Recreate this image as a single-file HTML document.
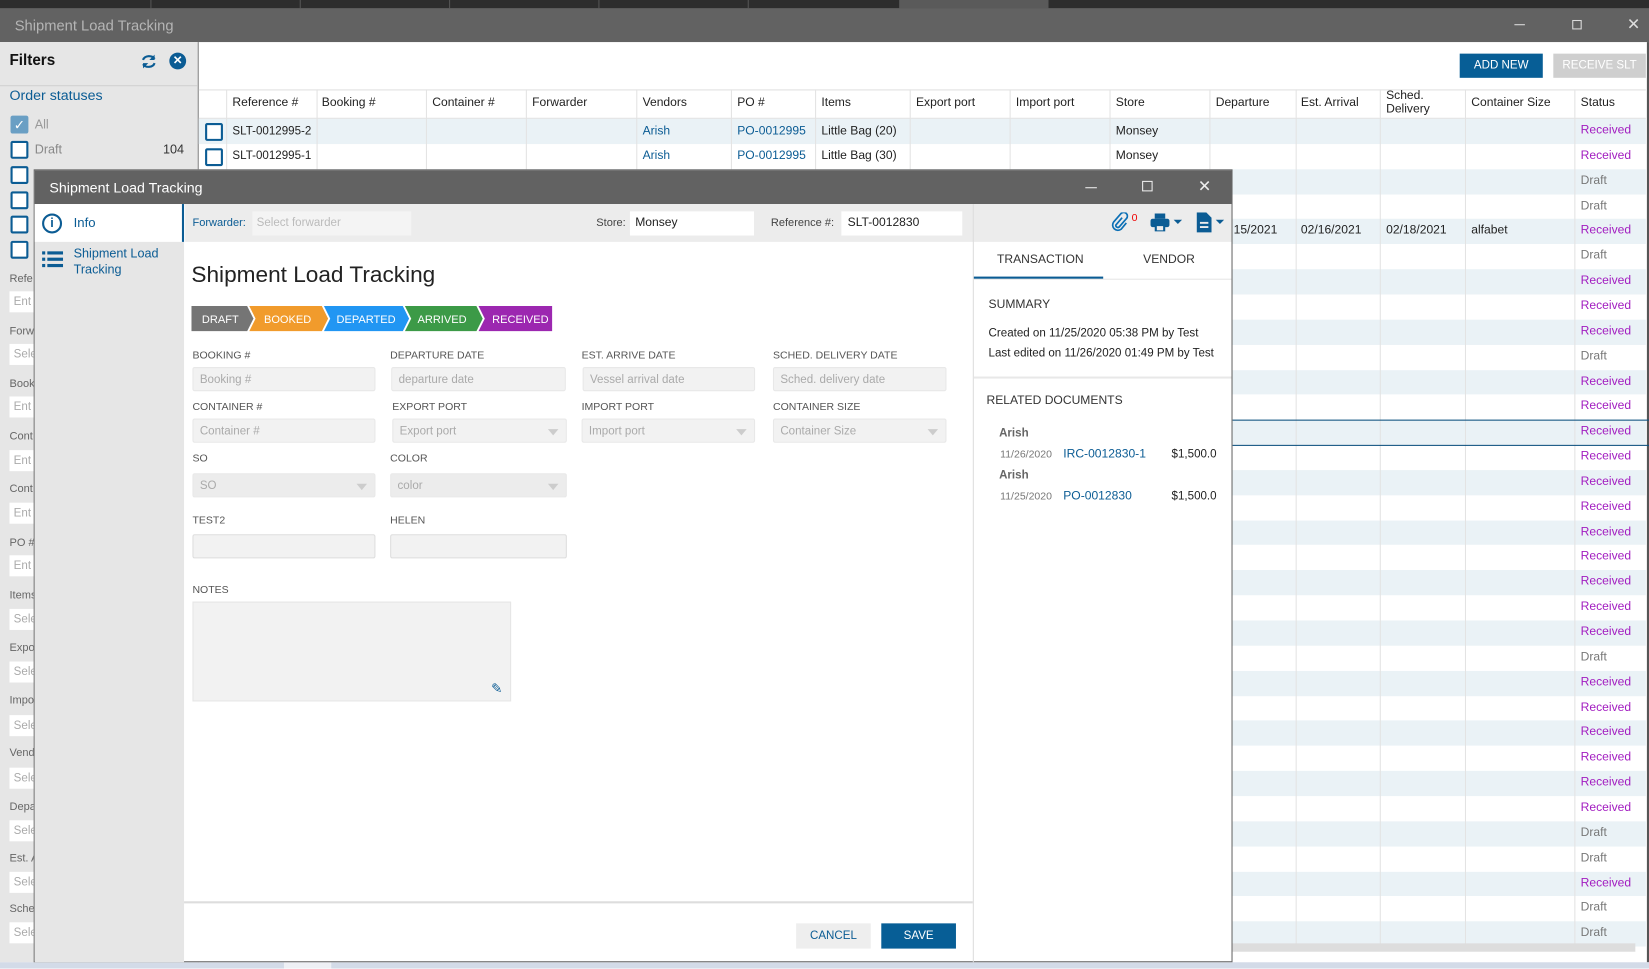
<!DOCTYPE html>
<html><head><meta charset="utf-8"><style>
*{box-sizing:border-box;margin:0;padding:0}
body{width:1649px;height:969px;overflow:hidden;background:#fff;font-family:"Liberation Sans",sans-serif;}
#w{position:absolute;left:0;top:0;width:1568px;height:921px;transform:scale(1.05166);transform-origin:0 0;overflow:hidden;background:#fff}
.a{position:absolute}
.t{position:absolute;white-space:nowrap}
.cb{position:absolute;width:17px;height:17px;border:2px solid #0b5c94;border-radius:2px;background:#fff}
.lbl{position:absolute;font-size:10px;color:#555;white-space:nowrap}
.inp{position:absolute;height:23px;background:#f2f2f2;border:1px solid #e8e8e8;border-radius:2px;font-size:11px;color:#aaa;padding:5px 6px;white-space:nowrap}
.dd::after{content:"";position:absolute;right:7px;top:9px;border-left:5px solid transparent;border-right:5px solid transparent;border-top:6px solid #ccc}
.row{position:absolute;left:189px;width:1376px;height:23.85px}
.st{position:absolute;left:1503px;font-size:11.5px}
.vl{position:absolute;top:85px;width:1px;height:815px;background:#e3e3e3}
.th{position:absolute;top:92px;font-size:11.5px;color:#222;white-space:nowrap}
.fl{position:absolute;left:9px;font-size:10.5px;color:#666}
.fi{position:absolute;left:9px;width:172px;height:20px;background:#fff;font-size:11px;color:#aaa;padding:4px 4px}
.c{font-size:11.5px}
</style></head><body><div id="w">
<div class="a" style="left:0;top:0;width:1568px;height:8px;background:#2d2d2d"></div>
<div class="a" style="left:143px;top:0;width:1px;height:8px;background:#555"></div>
<div class="a" style="left:285px;top:0;width:1px;height:8px;background:#555"></div>
<div class="a" style="left:427px;top:0;width:1px;height:8px;background:#555"></div>
<div class="a" style="left:569px;top:0;width:1px;height:8px;background:#555"></div>
<div class="a" style="left:711px;top:0;width:1px;height:8px;background:#555"></div>
<div class="a" style="left:855px;top:0;width:142px;height:8px;background:#5a5a5a"></div>
<div class="a" style="left:0;top:8px;width:1568px;height:32px;background:#626262"></div>
<div class="t" style="left:14px;top:16px;font-size:14px;color:#b5b5b5">Shipment Load Tracking</div>
<div class="a" style="left:1440px;top:23px;width:10px;height:1px;background:#ddd"></div>
<div class="a" style="left:1495px;top:19px;width:9px;height:9px;border:1px solid #ddd"></div>
<div class="t" style="left:1547px;top:14px;font-size:15px;color:#ddd">✕</div>
<div class="a" style="left:0;top:40px;width:189px;height:875px;background:#e6e6e6;border-right:1px solid #888"></div>
<div class="t" style="left:9px;top:50px;font-size:14.5px;font-weight:bold;color:#111">Filters</div>
<svg class="a" style="left:133px;top:50px" width="17" height="17" viewBox="0 0 17 17"><path d="M3 7a6 5 0 0 1 11-1M14 10a6 5 0 0 1-11 1" fill="none" stroke="#0b5c94" stroke-width="2"/><path d="M14 2v5h-5zM3 15v-5h5z" fill="#0b5c94"/></svg>
<div class="a" style="left:161px;top:50px;width:16px;height:16px;border-radius:50%;background:#0b5c94;color:#fff;font-size:11px;text-align:center;line-height:16px;font-weight:bold">✕</div>
<div class="a" style="left:0;top:81px;width:188px;height:1px;background:#d0d0d0"></div>
<div class="t" style="left:9px;top:83px;font-size:13.5px;color:#0b5c94">Order statuses</div>
<div class="a" style="left:10px;top:110px;width:17px;height:17px;background:#6a9fc4;border-radius:2px;color:#fff;font-size:13px;text-align:center;line-height:17px">✓</div>
<div class="t" style="left:33px;top:111px;font-size:12px;color:#999">All</div>
<div class="cb" style="left:10px;top:134px"></div>
<div class="t" style="left:33px;top:135px;font-size:12px;color:#888">Draft</div>
<div class="t" style="left:155px;top:135px;font-size:12px;color:#333">104</div>
<div class="cb" style="left:10px;top:158px"></div>
<div class="cb" style="left:10px;top:182px"></div>
<div class="cb" style="left:10px;top:205px"></div>
<div class="cb" style="left:10px;top:229px"></div>
<div class="fl" style="top:259px">Refe</div><div class="fi" style="top:277px">Ent</div>
<div class="fl" style="top:309px">Forw</div><div class="fi" style="top:327px">Sele</div>
<div class="fl" style="top:359px">Book</div><div class="fi" style="top:377px">Ent</div>
<div class="fl" style="top:409px">Cont</div><div class="fi" style="top:428px">Ent</div>
<div class="fl" style="top:459px">Cont</div><div class="fi" style="top:478px">Ent</div>
<div class="fl" style="top:510px">PO #</div><div class="fi" style="top:528px">Ent</div>
<div class="fl" style="top:560px">Items</div><div class="fi" style="top:579px">Sele</div>
<div class="fl" style="top:610px">Expo</div><div class="fi" style="top:629px">Sele</div>
<div class="fl" style="top:660px">Impo</div><div class="fi" style="top:680px">Sele</div>
<div class="fl" style="top:710px">Vend</div><div class="fi" style="top:730px">Sele</div>
<div class="fl" style="top:761px">Depa</div><div class="fi" style="top:780px">Sele</div>
<div class="fl" style="top:810px">Est. A</div><div class="fi" style="top:829px">Sele</div>
<div class="fl" style="top:858px">Sche</div><div class="fi" style="top:877px">Sele</div>
<div class="a" style="left:1566px;top:40px;width:2px;height:875px;background:#555"></div>
<div class="a" style="left:1388px;top:51px;width:79px;height:23px;background:#075e96;color:#fff;font-size:11px;text-align:center;line-height:23px">ADD NEW</div>
<div class="a" style="left:1477px;top:51px;width:88px;height:23px;background:#cfcfcf;color:#fff;font-size:11px;text-align:center;line-height:23px">RECEIVE SLT</div>
<div class="a" style="left:189px;top:85px;width:1376px;height:1px;background:#e0e0e0"></div>
<div class="a" style="left:189px;top:112px;width:1376px;height:1px;background:#e0e0e0"></div>
<div class="th" style="left:221px">Reference #</div><div class="th" style="left:306px">Booking #</div><div class="th" style="left:411px">Container #</div><div class="th" style="left:506px">Forwarder</div><div class="th" style="left:611px">Vendors</div><div class="th" style="left:701px">PO #</div><div class="th" style="left:781px">Items</div><div class="th" style="left:871px">Export port</div><div class="th" style="left:966px">Import port</div><div class="th" style="left:1061px">Store</div><div class="th" style="left:1156px">Departure</div><div class="th" style="left:1237px">Est. Arrival</div><div class="th" style="left:1318px;top:85px;line-height:13px">Sched.<br>Delivery</div><div class="th" style="left:1399px">Container Size</div><div class="th" style="left:1503px">Status</div>
<div id="rows"></div>
<div class="vl" style="left:215px"></div><div class="vl" style="left:301px"></div><div class="vl" style="left:405px"></div><div class="vl" style="left:500px"></div><div class="vl" style="left:605px"></div><div class="vl" style="left:695px"></div><div class="vl" style="left:775px"></div><div class="vl" style="left:865px"></div><div class="vl" style="left:960px"></div><div class="vl" style="left:1055px"></div><div class="vl" style="left:1150px"></div><div class="vl" style="left:1232px"></div><div class="vl" style="left:1312px"></div><div class="vl" style="left:1393px"></div><div class="vl" style="left:1497px"></div>
<div class="cb" style="left:195px;top:117px"></div><div class="cb" style="left:195px;top:141px"></div>
<div class="t c" style="left:221px;top:119px;color:#222;font-size:11px">SLT-0012995-2</div>
<div class="t c" style="left:221px;top:142px;color:#222;font-size:11px">SLT-0012995-1</div>
<div class="t c" style="left:611px;top:119px;color:#0b5c94">Arish</div><div class="t c" style="left:611px;top:142px;color:#0b5c94">Arish</div>
<div class="t c" style="left:701px;top:119px;color:#0b5c94">PO-0012995</div><div class="t c" style="left:701px;top:142px;color:#0b5c94">PO-0012995</div>
<div class="t c" style="left:781px;top:119px;color:#222">Little Bag (20)</div><div class="t c" style="left:781px;top:142px;color:#222">Little Bag (30)</div>
<div class="t c" style="left:1061px;top:119px;color:#222">Monsey</div><div class="t c" style="left:1061px;top:142px;color:#222">Monsey</div>
<div class="t c" style="left:1173px;top:213px;color:#222">15/2021</div><div class="t c" style="left:1237px;top:213px;color:#222">02/16/2021</div><div class="t c" style="left:1318px;top:213px;color:#222">02/18/2021</div><div class="t c" style="left:1399px;top:213px;color:#222">alfabet</div>
<div class="a" style="left:1172px;top:399px;width:1393px;height:1px;background:#0b4f7e"></div>
<div class="a" style="left:1172px;top:423px;width:1393px;height:1px;background:#0b4f7e"></div>
<div class="a" style="left:1172px;top:897px;width:383px;height:8px;background:#ddd"></div>
<div class="a" style="left:0;top:915px;width:1568px;height:6px;background:#d3dbe8"></div>
<div class="a" style="left:270px;top:915px;width:45px;height:6px;background:#eef0f5"></div>
<div class="a" style="left:32px;top:161px;width:1140px;height:754px;background:#fff;border:1px solid #666"></div>
<div class="a" style="left:33px;top:162px;width:1138px;height:32px;background:#626262"></div>
<div class="t" style="left:47px;top:171px;font-size:13.5px;color:#fff">Shipment Load Tracking</div>
<div class="a" style="left:1032px;top:178px;width:11px;height:1px;background:#eee"></div>
<div class="a" style="left:1086px;top:172px;width:10px;height:10px;border:1px solid #eee"></div>
<div class="t" style="left:1139px;top:168px;font-size:15px;color:#eee">✕</div>
<div class="a" style="left:33px;top:194px;width:142px;height:721px;background:#e6e6e6"></div>
<div class="a" style="left:33px;top:194px;width:142px;height:36px;background:#fff;border-right:2px solid #0b5c94"></div>
<div class="a" style="left:40px;top:203px;width:19px;height:19px;border:2px solid #0b5c94;border-radius:50%;color:#0b5c94;font-size:12px;font-weight:bold;text-align:center;line-height:15px">i</div>
<div class="t" style="left:70px;top:205px;font-size:12.5px;color:#0b5c94">Info</div>
<svg class="a" style="left:40px;top:238px" width="20" height="20" viewBox="0 0 20 20" fill="#0b5c94"><rect x="0" y="1" width="3" height="3"/><rect x="5" y="1" width="15" height="3"/><rect x="0" y="7" width="3" height="3"/><rect x="5" y="7" width="15" height="3"/><rect x="0" y="13" width="3" height="3"/><rect x="5" y="13" width="15" height="3"/></svg>
<div class="t" style="left:70px;top:234px;font-size:12px;color:#0b5c94;line-height:15px">Shipment Load<br>Tracking</div>
<div class="a" style="left:176px;top:194px;width:995px;height:36px;background:#ececec"></div>
<div class="t" style="left:183px;top:206px;font-size:10.5px;color:#0b5c94">Forwarder:</div>
<div class="a" style="left:240px;top:201px;width:151px;height:23px;background:#f4f4f4;font-size:11px;color:#bbb;padding:5px 4px">Select forwarder</div>
<div class="t" style="left:567px;top:206px;font-size:10.5px;color:#444">Store:</div>
<div class="a" style="left:599px;top:201px;width:118px;height:23px;background:#fff;font-size:11.5px;color:#222;padding:5px 5px">Monsey</div>
<div class="t" style="left:733px;top:206px;font-size:10.5px;color:#444">Reference #:</div>
<div class="a" style="left:800px;top:201px;width:115px;height:23px;background:#fff;font-size:11.5px;color:#222;padding:5px 6px">SLT-0012830</div>
<svg class="a" style="left:1055px;top:202px" width="18" height="18" viewBox="0 0 18 18"><path d="M12 5l-6 7a2 2 0 0 0 3 2l7-8a3.5 3.5 0 0 0-5-5l-7 8a5 5 0 0 0 7 7l5-6" fill="none" stroke="#0b6fb5" stroke-width="1.6"/></svg>
<div class="t" style="left:1076px;top:202px;font-size:10px;color:#e00">0</div>
<svg class="a" style="left:1094px;top:203px" width="32" height="18" viewBox="0 0 32 18" fill="#0b5c94"><rect x="4" y="0" width="10" height="5"/><rect x="0" y="5" width="18" height="8" rx="2"/><rect x="4" y="11" width="10" height="6"/><rect x="6" y="12" width="6" height="4" fill="#ececec"/><path d="M22 6h8l-4 4z"/></svg>
<svg class="a" style="left:1137px;top:202px" width="30" height="20" viewBox="0 0 30 20" fill="#0b5c94"><path d="M1 0h9l5 5v14h-14z"/><rect x="4" y="9" width="8" height="1.8" fill="#ececec"/><rect x="4" y="13" width="8" height="1.8" fill="#ececec"/><path d="M19 7h8l-4 4z"/></svg>
<div class="a" style="left:925px;top:194px;width:1px;height:721px;background:#ddd"></div>
<div class="t" style="left:182px;top:249px;font-size:21.5px;color:#222">Shipment Load Tracking</div>
<svg class="a" style="left:182px;top:291px" width="345" height="24" viewBox="0 0 345 24">
<path d="M0 0h53l6 12-6 12h-53z" fill="#757575"/>
<path d="M55 0h69l6 12-6 12h-69l6-12z" fill="#f19b2c"/>
<path d="M126 0h75l6 12-6 12h-75l6-12z" fill="#2196f3"/>
<path d="M203 0h68l6 12-6 12h-68l6-12z" fill="#3c9a47"/>
<path d="M273 0h70v24h-70l6-12z" fill="#9c27b0"/>
<g font-family="Liberation Sans" font-size="10.5" fill="#fff"><text x="10" y="16">DRAFT</text><text x="69" y="16">BOOKED</text><text x="138" y="16">DEPARTED</text><text x="215" y="16">ARRIVED</text><text x="286" y="16">RECEIVED</text></g></svg>
<div class="lbl" style="left:183px;top:333px">BOOKING #</div><div class="inp" style="left:183px;top:349px;width:174px">Booking #</div>
<div class="lbl" style="left:371px;top:333px">DEPARTURE DATE</div><div class="inp" style="left:372px;top:349px;width:166px">departure date</div>
<div class="lbl" style="left:553px;top:333px">EST. ARRIVE DATE</div><div class="inp" style="left:554px;top:349px;width:164px">Vessel arrival date</div>
<div class="lbl" style="left:735px;top:333px">SCHED. DELIVERY DATE</div><div class="inp" style="left:735px;top:349px;width:165px">Sched. delivery date</div>
<div class="lbl" style="left:183px;top:382px">CONTAINER #</div><div class="inp" style="left:183px;top:398px;width:174px">Container #</div>
<div class="lbl" style="left:373px;top:382px">EXPORT PORT</div><div class="inp dd" style="left:373px;top:398px;width:166px">Export port</div>
<div class="lbl" style="left:553px;top:382px">IMPORT PORT</div><div class="inp dd" style="left:553px;top:398px;width:165px">Import port</div>
<div class="lbl" style="left:735px;top:382px">CONTAINER SIZE</div><div class="inp dd" style="left:735px;top:398px;width:165px">Container Size</div>
<div class="lbl" style="left:183px;top:431px">SO</div><div class="inp dd" style="left:183px;top:450px;width:174px;background:#ececec">SO</div>
<div class="lbl" style="left:371px;top:431px">COLOR</div><div class="inp dd" style="left:371px;top:450px;width:168px;background:#ececec">color</div>
<div class="lbl" style="left:183px;top:490px">TEST2</div><div class="inp" style="left:183px;top:508px;width:174px;border-color:#ddd"></div>
<div class="lbl" style="left:371px;top:490px">HELEN</div><div class="inp" style="left:371px;top:508px;width:168px;border-color:#ddd"></div>
<div class="lbl" style="left:183px;top:556px">NOTES</div>
<div class="a" style="left:183px;top:572px;width:303px;height:95px;background:#f2f2f2;border:1px solid #e6e6e6"></div>
<div class="t" style="left:467px;top:647px;font-size:13px;color:#0b5c94">✎</div>
<div class="a" style="left:175px;top:857px;width:750px;height:2px;background:#ddd"></div>
<div class="a" style="left:757px;top:878px;width:71px;height:24px;background:#eee;color:#0b5c94;font-size:11px;text-align:center;line-height:24px">CANCEL</div>
<div class="a" style="left:838px;top:878px;width:71px;height:24px;background:#075e96;color:#fff;font-size:11px;text-align:center;line-height:24px">SAVE</div>
<div class="t" style="left:948px;top:241px;font-size:11.5px;color:#333">TRANSACTION</div>
<div class="t" style="left:1087px;top:241px;font-size:11.5px;color:#333">VENDOR</div>
<div class="a" style="left:926px;top:265px;width:245px;height:1px;background:#e6e6e6"></div>
<div class="a" style="left:926px;top:263px;width:123px;height:2px;background:#0b5c94"></div>
<div class="t" style="left:940px;top:284px;font-size:11.5px;color:#333">SUMMARY</div>
<div class="t" style="left:940px;top:311px;font-size:11px;color:#222">Created on 11/25/2020 05:38 PM by Test</div>
<div class="t" style="left:940px;top:330px;font-size:11px;color:#222">Last edited on 11/26/2020 01:49 PM by Test</div>
<div class="a" style="left:926px;top:358px;width:245px;height:2px;background:#e8e8e8"></div>
<div class="t" style="left:938px;top:375px;font-size:11.5px;color:#333">RELATED DOCUMENTS</div>
<div class="t" style="left:950px;top:406px;font-size:11px;font-weight:bold;color:#666">Arish</div>
<div class="t" style="left:951px;top:427px;font-size:10px;color:#777">11/26/2020</div>
<div class="t" style="left:1011px;top:426px;font-size:11.5px;color:#0b5c94">IRC-0012830-1</div>
<div class="t" style="left:1114px;top:426px;font-size:11px;color:#222">$1,500.0</div>
<div class="t" style="left:950px;top:446px;font-size:11px;font-weight:bold;color:#666">Arish</div>
<div class="t" style="left:951px;top:467px;font-size:10px;color:#777">11/25/2020</div>
<div class="t" style="left:1011px;top:466px;font-size:11.5px;color:#0b5c94">PO-0012830</div>
<div class="t" style="left:1114px;top:466px;font-size:11px;color:#222">$1,500.0</div>
</div>
<script>
var s="RRDDRDRRRDRRRRRRRRRRRDRRRRRRDDRDD",h="";
for(var i=0;i<33;i++){var y=113+i*23.85;
if(i%2==0)h+='<div class="row" style="top:'+y+'px;background:#eaf2f6"></div>';
var r=s[i]=="R";h+='<div class="st" style="top:'+(y+5)+'px;color:'+(r?'#a21cc0':'#777')+'">'+(r?'Received':'Draft')+'</div>';}
document.getElementById('rows').outerHTML=h;
</script>
</body></html>
